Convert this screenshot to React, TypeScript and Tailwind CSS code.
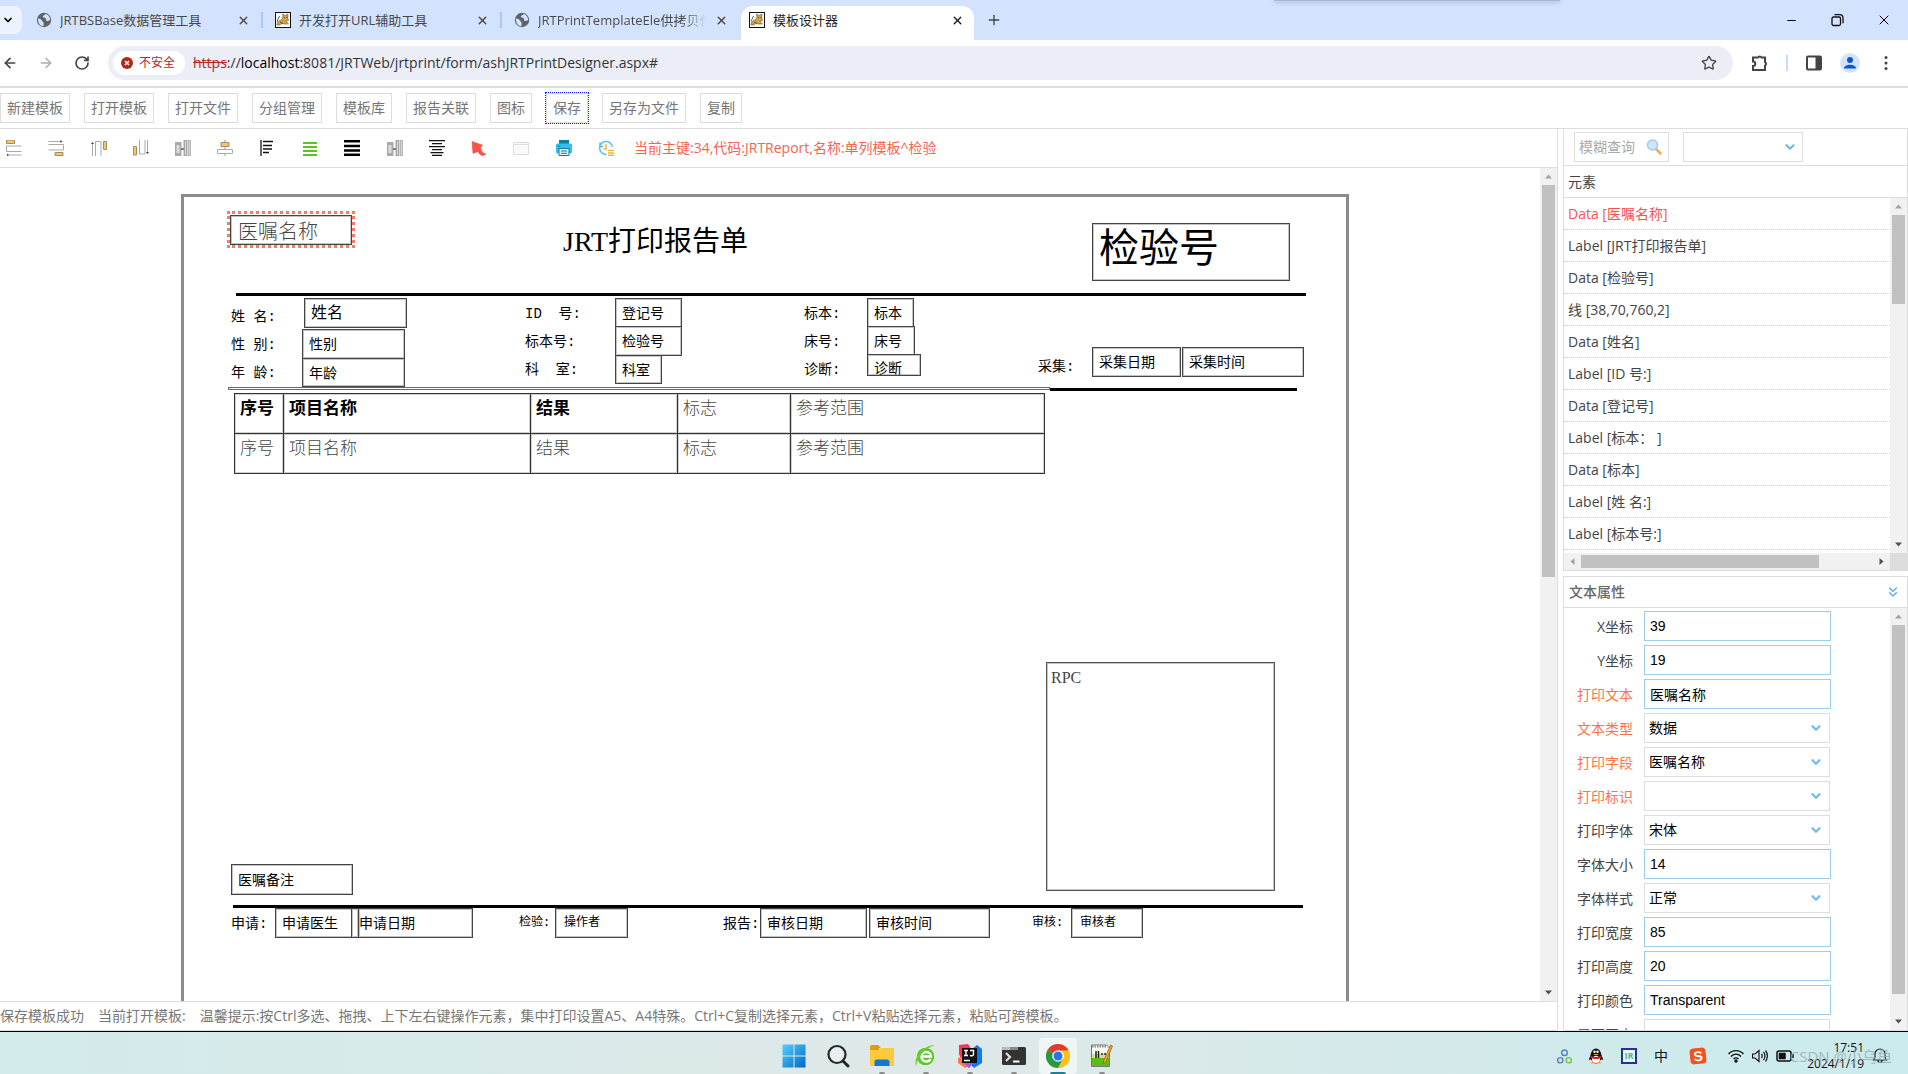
import type { CSSProperties, ReactNode } from 'react'
import clsx from 'clsx'
import { ArrowLeft, ArrowRight, ChevronDown, ChevronsDown, Minus, Plus, RotateCw, Star, X } from 'lucide-react'

const menuButtons = ['新建模板', '打开模板', '打开文件', '分组管理', '模板库', '报告关联', '图标', '保存', '另存为文件', '复制']

const elements = [
    'Data [医嘱名称]',
    'Label [JRT打印报告单]',
    'Data [检验号]',
    '线 [38,70,760,2]',
    'Data [姓名]',
    'Label [ID 号:]',
    'Data [登记号]',
    'Label [标本： ]',
    'Data [标本]',
    'Label [姓 名:]',
    'Label [标本号:]',
]

interface Field {
    label: string
    value: string
    select?: boolean
    hot?: boolean
}

const fields: Field[] = [
    { label: 'X坐标', value: '39' },
    { label: 'Y坐标', value: '19' },
    { label: '打印文本', value: '医嘱名称', hot: true },
    { label: '文本类型', value: '数据', select: true, hot: true },
    { label: '打印字段', value: '医嘱名称', select: true, hot: true },
    { label: '打印标识', value: '', select: true, hot: true },
    { label: '打印字体', value: '宋体', select: true },
    { label: '字体大小', value: '14' },
    { label: '字体样式', value: '正常', select: true },
    { label: '打印宽度', value: '85' },
    { label: '打印高度', value: '20' },
    { label: '打印颜色', value: 'Transparent' },
    { label: '是否画小', value: '', select: true },
]

// Positions on the sheet, in px from its inner top-left corner
interface Box {
    x: number
    y: number
    w: number
    h: number
    text: string
    cls?: string
}

const plain = 'pl-1.5 pt-0.5'

const boxes: Box[] = [
    { x: 46, y: 18, w: 122, h: 30, text: '医嘱名称', cls: 'pl-[7px] pt-2 text-[20px] font-light text-[#444]' },
    { x: 908, y: 26, w: 198, h: 58, text: '检验号', cls: 'pl-1.5 text-[40px]' },
    { x: 120, y: 101, w: 103, h: 30, text: '姓名', cls: 'pl-1.5 pt-0.5 text-base' },
    { x: 118, y: 132, w: 103, h: 30, text: '性别' },
    { x: 118, y: 161, w: 103, h: 29, text: '年龄' },
    { x: 431, y: 101, w: 67, h: 30, text: '登记号' },
    { x: 431, y: 129, w: 67, h: 30, text: '检验号' },
    { x: 431, y: 158, w: 47, h: 29, text: '科室' },
    { x: 683, y: 101, w: 47, h: 30, text: '标本' },
    { x: 683, y: 129, w: 48, h: 30, text: '床号' },
    { x: 683, y: 157, w: 54, h: 22, text: '诊断', cls: 'pl-1.5 pt-2' },
    { x: 908, y: 150, w: 89, h: 30, text: '采集日期' },
    { x: 998, y: 150, w: 122, h: 30, text: '采集时间' },
    { x: 47, y: 667, w: 122, h: 31, text: '医嘱备注' },
    { x: 91, y: 711, w: 84, h: 30, text: '申请医生' },
    { x: 167, y: 711, w: 122, h: 30, text: '' },
    { x: 174, y: 711, w: 115, h: 30, text: '申请日期', cls: 'pl-0 pt-0.5' },
    { x: 371, y: 711, w: 73, h: 30, text: '操作者', cls: 'pl-2 text-xs' },
    { x: 576, y: 711, w: 107, h: 30, text: '审核日期' },
    { x: 685, y: 711, w: 121, h: 30, text: '审核时间' },
    { x: 887, y: 711, w: 72, h: 30, text: '审核者', cls: 'pl-2 text-xs' },
]

interface Label {
    x: number
    y: number
    text: string
    cls?: string
}

const labels: Label[] = [
    { x: 47, y: 110, text: '姓 名:' },
    { x: 47, y: 138, text: '性 别:' },
    { x: 47, y: 166, text: '年 龄:' },
    { x: 341, y: 107, text: 'ID  号:' },
    { x: 341, y: 135, text: '标本号:' },
    { x: 341, y: 163, text: '科  室:' },
    { x: 620, y: 107, text: '标本:' },
    { x: 620, y: 135, text: '床号:' },
    { x: 620, y: 163, text: '诊断:' },
    { x: 854, y: 160, text: '采集:' },
    { x: 47, y: 717, text: '申请:' },
    { x: 335, y: 716, text: '检验:', cls: 'text-xs' },
    { x: 539, y: 717, text: '报告:' },
    { x: 848, y: 716, text: '审核:', cls: 'text-xs' },
]

const rules = [
    { x: 52, y: 96, w: 1070, h: 3 },
    { x: 866, y: 191, w: 247, h: 3 },
    { x: 49, y: 708, w: 1070, h: 3 },
]

const columns = ['序号', '项目名称', '结果', '标志', '参考范围']

const place = (x: number, y: number, w?: number, h?: number): CSSProperties => ({ left: x, top: y, width: w, height: h })

function GlobeIcon() {
    return (
        <svg className="size-4 shrink-0" viewBox="0 0 16 16">
            <circle cx="8" cy="8" r="7.2" fill="#5f6368" />
            <path d="M2 6.5c2 .3 3.5.7 3.8 2 .3 1 1.6.8 1.7 2.2v3.6C4 14 1.7 11 2 6.5Z" fill="#d3e3fd" />
            <path d="M9.5 2.1c-.3 1.5-2.5 1.2-2.7 2.5-.1 1.3 2 .7 3 1.8.8 1-.2 2.4 1.2 2.6 1.2.2 1.6-.6 3-.8.3-3-1.7-5.3-4.5-6.1Z" fill="#d3e3fd" />
        </svg>
    )
}

function CatIcon() {
    return (
        <svg className="size-4 shrink-0" viewBox="0 0 16 16">
            <rect x="0.5" y="0.5" width="15" height="15" fill="#fff" stroke="#111" />
            <path d="M2 13c0-3 1.5-4.5 4.5-5L8 5l-.5-3 2.5 1.5L13 2l-.3 4 .8 2.5-2.5 1 2.5 2.5H9l-2-1.5L5 13Z" fill="#d3a447" stroke="#6b5427" strokeWidth=".6" />
            <path d="M2 9.5 4.5 4M9 5.500h1M11.500 5.500h1M5 10l3 2" stroke="#333" strokeWidth=".8" />
        </svg>
    )
}

interface TabProps {
    title: string
    cat?: boolean
    active?: boolean
    fade?: boolean
}

function Tab({ title, cat, active, fade }: TabProps) {
    return (
        <div
            className={clsx(
                'flex items-center gap-2 text-[13px]',
                active ? 'ml-0.5 mt-1.5 h-[34px] w-[233px] rounded-t-xl bg-white pb-1.5 pl-2 pr-2.5 text-[#1f1f1f]' : 'h-10 w-[237px] pl-3 pr-[11px] text-[#474747]',
            )}
        >
            {cat ? <CatIcon /> : <GlobeIcon />}
            <span className={clsx('flex-1 overflow-hidden whitespace-nowrap', fade && 'bg-linear-to-r from-[#474747] from-85% to-transparent bg-clip-text text-transparent')}>
                {title}
            </span>
            <button aria-label="关闭标签页">
                <X className="size-[13px]" strokeWidth={2.5} />
            </button>
        </div>
    )
}

function BrowserBar() {
    return (
        <header>
            <div className="relative flex h-10 bg-[#d3e3fd]">
                <button aria-label="搜索标签页" className="mt-1.5 flex h-7 w-[22px] items-center rounded-r-lg bg-[#edf3fe] pl-0.5">
                    <ChevronDown className="size-3" strokeWidth={3.5} />
                </button>
                <div className="flex flex-1 items-center pl-0.5">
                    <Tab title="JRTBSBase数据管理工具" />
                    <div className="h-4 w-0.5 bg-[#a8c7fa]" />
                    <Tab title="开发打开URL辅助工具" cat />
                    <div className="h-4 w-0.5 bg-[#a8c7fa]" />
                    <Tab title="JRTPrintTemplateEle供拷贝代码" fade />
                    <Tab title="模板设计器" cat active />
                    <button aria-label="新标签页" className="ml-3">
                        <Plus className="size-4 text-[#444]" />
                    </button>
                </div>
                <div className="flex items-center gap-[31px] pr-4">
                    <button aria-label="最小化"><Minus className="size-[13px]" /></button>
                    <button aria-label="还原" className="size-4">
                        <svg viewBox="0 0 16 16" fill="none" stroke="#111" strokeWidth="1.3">
                            <rect x="3" y="5" width="8.5" height="8.5" rx="1.5" />
                            <path d="M5.5 2.7H11a3 3 0 0 1 3 3v5.500" />
                        </svg>
                    </button>
                    <button aria-label="关闭"><X className="size-4" strokeWidth={1.5} /></button>
                </div>
                <div className="absolute right-[348px] top-0 h-px w-[286px] bg-[#a9b6cb] shadow-[0_1px_4px_#6b7a92]" />
            </div>
            <div className="flex h-12 items-center border-b-2 border-[#ddd] pr-3.5 text-[#444]">
                <button aria-label="后退" className="ml-0.5"><ArrowLeft className="size-4" strokeWidth={2.5} /></button>
                <button aria-label="前进" className="ml-5"><ArrowRight className="size-4 text-[#aaa]" /></button>
                <button aria-label="刷新" className="ml-5"><RotateCw className="size-4" strokeWidth={2.5} /></button>
                <div className="ml-[18px] flex h-[34px] flex-1 items-center rounded-full bg-[#ebeef7] pl-[5px] pr-4">
                    <button className="flex h-6 items-center gap-1.5 rounded-full bg-white pl-2 pr-2.5 text-xs text-[#b3261e]">
                        <svg className="size-3" viewBox="0 0 12 12">
                            <circle cx="6" cy="6" r="6" fill="#b3261e" />
                            <path d="m4 4 4 4m0-4-4 4" stroke="#fff" strokeWidth="1.6" />
                        </svg>
                        不安全
                    </button>
                    <a href="#" className="ml-2 flex-1 text-sm text-[#333]">
                        <span className="text-[#b3261e] line-through">https</span>://<span className="text-black">localhost</span>:8081/JRTWeb/jrtprint/form/ashJRTPrintDesigner.aspx#
                    </a>
                    <Star className="size-4" />
                </div>
                <svg className="ml-[18px] size-[18px]" viewBox="0 0 18 18" fill="none" stroke="#444" strokeWidth="2">
                    <path d="M2 3.5h5a2 2 0 0 1 3.5 0H14V8a2 2 0 0 1 0 3.5V16H2v-4a2.2 2.2 0 0 0 0-4.5Z" />
                </svg>
                <div className="ml-[17px] h-4 w-0.5 bg-[#c7dcfc]" />
                <svg className="ml-[18px] size-4" viewBox="0 0 16 16">
                    <rect x="1" y="1.5" width="14" height="13" rx="1" fill="none" stroke="#444" strokeWidth="2" />
                    <path d="M9.5 1H15v14H9.5z" fill="#444" />
                </svg>
                <svg className="ml-[18px] size-5" viewBox="0 0 20 20">
                    <circle cx="10" cy="10" r="10" fill="#d3e3fd" />
                    <circle cx="10" cy="7" r="3" fill="#0b57d0" />
                    <path d="M4 15.500c0-5 12-5 12 0z" fill="#0b57d0" />
                </svg>
                <svg className="ml-[18px] size-4" viewBox="0 0 16 16" fill="#444">
                    <circle cx="8" cy="2.5" r="1.5" />
                    <circle cx="8" cy="8" r="1.5" />
                    <circle cx="8" cy="13.5" r="1.5" />
                </svg>
            </div>
        </header>
    )
}

const widthIcon = (
    <>
        <path d="M0 2h6.5v14H0z" fill="#a9a9a9" />
        <path d="M1.500 5v8h3V5z" fill="#dcdcdc" />
        <path d="M6 8h3v2H6z" fill="#777" />
        <path d="M8.500 0h3.500v16H8.500z" fill="#a5a5a5" />
        <path d="M12.500 0H16v16h-3.500z" fill="#b5b5b5" />
        <path d="M10.500 1v14M14.500 1v14" stroke="#d8d8d8" />
    </>
)

const toolIcons: { name: string; art: ReactNode }[] = [
    { name: '左对齐', art: <><path d="M.5 0h8v3.5h-8z" fill="#edc57b" stroke="#a98d55" /><path d="M15.5 6H.5v5.5h15M15.5 15H1" fill="none" stroke="#aaa" /><path d="M1 13.500v2.500l2-1z" fill="#444" /></> },
    { name: '右对齐', art: <><path d="M7 12.5h8v3H7z" fill="#edc57b" stroke="#a98d55" /><path d="M.5 4.5h15V10H.5M.5 1.5H14" fill="none" stroke="#aaa" /><path d="M12.500 0v3l2-1.500z" fill="#444" /></> },
    { name: '顶对齐', art: <><path d="M12.5 1.500h3v8h-3z" fill="#edc57b" stroke="#a98d55" /><path d="M4.5 16V1.5H10V16M1.5 16V3" fill="none" stroke="#aaa" /><path d="M0 4h3L1.500 2z" fill="#444" /></> },
    { name: '底对齐', art: <><path d="M.5 6.500h3V15h-3z" fill="#edc57b" stroke="#a98d55" /><path d="M6.5 0v14H12V0M14.5 0v14" fill="none" stroke="#aaa" /><path d="M13 12h3l-1.500 2z" fill="#444" /></> },
    { name: '等宽', art: widthIcon },
    { name: '居中对齐', art: <><path d="M8 0v16" stroke="#999" /><path d="M4 2.500h8v4H4z" fill="#edc57b" stroke="#a98d55" /><path d="M.5 9.500h15v4H.5z" fill="#fff" stroke="#aaa" /></> },
    { name: '文本左对齐', art: <path d="M1 0v16M3 1.500h10M3 9h9M3 12.500h6M3 5.500h9" stroke="#111" strokeWidth="1.3" /> },
    { name: '行距', art: <path d="M1 3h14M1 7h14M1 11h14M1 15h14" stroke="#5cc422" strokeWidth="1.8" /> },
    { name: '等高', art: <path d="M0 1.300h16M0 6h16M0 10.500h16M0 14.700h16" stroke="#000" strokeWidth="2.6" /> },
    { name: '等间距', art: widthIcon },
    { name: '文本居中', art: <path d="M0 .7h16M3 3.700h10M0 6.700h16M3 9.700h10M1.500 12.700h13M3 15.400h10" stroke="#111" strokeWidth="1.2" /> },
    { name: '选择', art: <path d="M1 1.500 11.500 5l-2 3 2 4.500L15 14c-3 2.500-6 2-8-2.500l-5 2z" fill="#fb5347" stroke="#e0483e" strokeWidth=".5" /> },
    { name: '面板', art: <path d="M.5 2.500h15v12H.5zM.5 4.500h15" fill="#fafafa" stroke="#ddd" /> },
    { name: '打印', art: <><path d="M3 0h10v4H3z" fill="#0d7fa5" /><rect y="3.5" width="16" height="10" rx="1.5" fill="#35bfec" /><path d="M3 8.500h10v7H3z" fill="#d9f4fc" stroke="#0d7fa5" /><path d="M5 11h6M5 13.300h6M1.500 6h3" stroke="#0d7fa5" /></> },
    { name: '历史', art: <><path d="M8.500 14.500A6.500 6.500 0 1 1 14.500 7M2 2.500v4h3.500" fill="none" stroke="#57c3f2" strokeWidth="1.6" /><path d="M8 4v5H5.500M10 10.500h6M10 13h6M10 15.300h6" fill="none" stroke="#f5b53d" strokeWidth="1.5" /></> },
]

interface ScrollbarProps {
    thumb: string
    horizontal?: boolean
}

function Scrollbar({ thumb, horizontal }: ScrollbarProps) {
    return (
        <div className={clsx('flex shrink-0 bg-[#f1f1f1]', horizontal ? 'h-[17px] flex-1' : 'w-[17px] flex-col')}>
            <svg className="size-[17px]" viewBox="0 0 17 17">
                <path d={horizontal ? 'M10.5 5v7l-4-3.5z' : 'M5 10.5h7l-3.5-4z'} fill="#a3a3a3" />
            </svg>
            <div className="flex-1">
                <div className={clsx('bg-[#c1c1c1]', horizontal ? 'mt-0.5 h-[13px]' : 'ml-0.5 w-[13px]', thumb)} />
            </div>
            <svg className="size-[17px]" viewBox="0 0 17 17">
                <path d={horizontal ? 'M6.5 5v7l4-3.5z' : 'M5 6.5h7l-3.5 4z'} fill="#505050" />
            </svg>
        </div>
    )
}

function Sheet() {
    return (
        <div className="relative ml-[181px] mt-[26px] h-[1650px] w-[1168px] border-[3px] border-[#8c8c8c] font-['Liberation_Mono','Noto_Sans_CJK_SC',monospace] text-sm text-black">
            <div className="absolute border-[3px] border-dotted border-[#fb7a64]" style={place(43, 14, 128, 37)} />
            <h1 className="absolute whitespace-nowrap font-['Liberation_Serif','Noto_Sans_CJK_SC',serif] text-[28px] leading-9" style={place(379, 27)}>
                JRT打印报告单
            </h1>
            {rules.map((r) => (
                <div key={r.y} className="absolute bg-black" style={place(r.x, r.y, r.w, r.h)} />
            ))}
            {labels.map((l) => (
                <span key={`${l.x}-${l.y}`} className={clsx('absolute whitespace-pre leading-5', l.cls ?? 'text-sm')} style={place(l.x, l.y)}>
                    {l.text}
                </span>
            ))}
            {boxes.map((b) => (
                <div
                    key={`${b.x}-${b.y}`}
                    className={clsx('absolute flex items-center whitespace-nowrap border border-[#444] leading-none inset-ring inset-ring-[#c4c4c4]', b.cls ?? plain)}
                    style={place(b.x, b.y, b.w, b.h)}
                >
                    {b.text}
                </div>
            ))}
            <div className="absolute border border-[#666]" style={place(44, 190, 822, 3)} />
            <table className="absolute table-fixed border-collapse text-left text-[17px] leading-6" style={place(50, 196, 811)}>
                <colgroup>
                    <col className="w-[49px]" />
                    <col className="w-[247px]" />
                    <col className="w-[147px]" />
                    <col className="w-[113px]" />
                    <col />
                </colgroup>
                <thead>
                    <tr className="h-10">
                        {columns.map((c, i) => (
                            <th key={c} className={clsx('border border-[#333] pb-2 pl-[5px] inset-ring inset-ring-[#d0d0d0]', i < 3 ? 'font-bold' : 'font-light text-[#444]')}>{c}</th>
                        ))}
                    </tr>
                </thead>
                <tbody>
                    <tr className="h-10">
                        {columns.map((c) => (
                            <td key={c} className="border border-[#333] pb-2 pl-[5px] font-light text-[#444] inset-ring inset-ring-[#d0d0d0]">{c}</td>
                        ))}
                    </tr>
                </tbody>
            </table>
            <div className="absolute border border-[#555] pl-1 pt-[3px] font-['Liberation_Serif',serif] text-base text-[#444] inset-ring inset-ring-[#c4c4c4]" style={place(862, 465, 229, 229)}>
                RPC
            </div>
        </div>
    )
}

function ElementPanel() {
    return (
        <section className="border-x border-b border-[#ddd]">
            <div className="flex h-[37px] items-center gap-3.5 border-b border-[#ddd] pl-2.5">
                <div className="flex h-[30px] w-[95px] items-center border border-[#ddd] pl-1 pr-1.5">
                    <input aria-label="模糊查询" placeholder="模糊查询" className="min-w-0 flex-1 outline-none placeholder:text-[#aaa]" />
                    <svg className="size-4" viewBox="0 0 16 16">
                        <path d="m10 10 4.5 4.5" stroke="#f0a95b" strokeWidth="2.5" strokeLinecap="round" />
                        <circle cx="6.5" cy="6" r="5" fill="#cfe6fb" stroke="#a8c8e8" strokeWidth="1.5" />
                    </svg>
                </div>
                <div className="relative">
                    <select aria-label="元素类型" className="h-[30px] w-[120px] appearance-none border border-[#ddd]" />
                    <ChevronDown className="pointer-events-none absolute right-1.5 top-2 size-3.5 text-[#73bbee]" strokeWidth={4} />
                </div>
            </div>
            <h2 className="flex h-8 items-center border-b border-[#ddd] pl-1 text-[#444]">元素</h2>
            <div className="flex h-[355px]">
                <ul className="flex-1 overflow-hidden">
                    {elements.map((e, i) => (
                        <li key={e} className={clsx('flex h-8 items-center whitespace-pre border-b border-dotted border-[#ccc] pl-1', i === 0 ? 'text-[#fb5350]' : 'text-[#444]')}>
                            {e}
                        </li>
                    ))}
                </ul>
                <Scrollbar thumb="h-[89px]" />
            </div>
            <div className="flex">
                <Scrollbar thumb="w-[238px]" horizontal />
                <div className="w-[17px] bg-[#dcdcdc]" />
            </div>
        </section>
    )
}

function PropertyPanel() {
    return (
        <section className="mt-[5px] flex min-h-0 flex-1 flex-col border border-[#ddd]">
            <h2 className="flex h-[31px] shrink-0 items-center justify-between border-b border-[#ddd] pl-[5px] pr-1.5 font-medium text-[#666]">
                文本属性
                <button aria-label="折叠"><ChevronsDown className="size-4 text-[#58aee8]" /></button>
            </h2>
            <div className="flex min-h-0 flex-1">
                <form className="flex min-w-0 flex-1 flex-col gap-1 overflow-hidden pt-[3px]">
                    {fields.map((f) => (
                        <div key={f.label} className="flex h-[30px] shrink-0 items-center gap-[11px]">
                            <label htmlFor={f.label} className={clsx('w-[69px] pt-0.5 text-right', f.hot ? 'text-[#ff7349]' : 'text-[#444]')}>{f.label}</label>
                            {f.select ? (
                                <div className="relative">
                                    <select id={f.label} className="h-[30px] w-[186px] appearance-none border border-[#ddd] pl-1 font-['Liberation_Sans','Noto_Sans_CJK_SC',sans-serif] text-black">
                                        <option>{f.value}</option>
                                    </select>
                                    <ChevronDown className="pointer-events-none absolute right-[7px] top-2 size-3.5 text-[#73bbee]" strokeWidth={4} />
                                </div>
                            ) : (
                                <input
                                    id={f.label}
                                    defaultValue={f.value}
                                    className="h-[30px] w-[187px] border border-[#9bcdef] px-[5px] font-['Liberation_Sans','Noto_Sans_CJK_SC',sans-serif] text-black outline-none"
                                />
                            )}
                        </div>
                    ))}
                </form>
                <Scrollbar thumb="h-[369px]" />
            </div>
        </section>
    )
}

const apps: { name: string; state?: 'open' | 'active'; art: ReactNode }[] = [
    { name: '开始', art: <><defs><linearGradient id="win" x2="1" y2="1"><stop stopColor="#55d0fb" /><stop offset="1" stopColor="#0067c9" /></linearGradient></defs><path d="M.5.5h11v11H.5zM12.5.5h11v11h-11zM.5 12.5h11v11H.5zM12.5 12.5h11v11h-11z" fill="url(#win)" /></> },
    { name: '搜索', art: <><circle cx="11" cy="10.5" r="8.5" fill="#e8eeee" stroke="#262626" strokeWidth="2.2" /><path d="m17 17 5 5" stroke="#262626" strokeWidth="3" strokeLinecap="round" /></> },
    { name: '文件资源管理器', state: 'open', art: <><path d="M0 3a2 2 0 0 1 2-2h6l3 3H9v3H0z" fill="#dd9d08" /><path d="M0 6h9l2-2h13v18H0z" fill="#fdca3d" /><path d="M4.5 22v-4A2.5 2.5 0 0 1 7 15.500h10a2.500 2.500 0 0 1 2.500 2.500v4z" fill="#1277cf" /></> },
    { name: '浏览器', state: 'open', art: <><circle cx="11.5" cy="12.5" r="9.5" fill="#5cc52e" stroke="#dff3d5" strokeWidth="1.5" /><path d="M7 12.500h10c0-6-9.500-6-9.500 0 0 5.500 7 6.500 9 2.500" fill="none" stroke="#fff" strokeWidth="2.4" /><path d="M2 22C-1 13 10 1 21 1 15 3 4 10 2 22z" fill="#6fcb3e" /></> },
    { name: 'IntelliJ IDEA', state: 'open', art: <><path d="m1 1 9-1 4 6L3 15l-2-5z" fill="#fe315d" /><path d="m14 5 5-4 5 4v14l-8 5-5-5z" fill="#087cfa" /><path d="m0 14 6-2 6 9-5 3-7-5z" fill="#f97a4e" /><path d="M6 19h9l-4 5.500z" fill="#a35bd6" /><path d="M4 4h15v15H4z" fill="#111" /><path d="M6 6.500h4M8 6.500v5M6 11.500h4M12 6.500h3.500v4c0 1.500-2 1.500-3.500.8M6 16.500h6" fill="none" stroke="#fff" strokeWidth="1.4" /></> },
    { name: '终端', state: 'open', art: <><rect y="3" width="24" height="18" rx="1.5" fill="#333" /><path d="M0 4.500A1.500 1.500 0 0 1 1.500 3H8v3H0z" fill="#bbb" /><path d="M8 3h8v3H8z" fill="#888" /><path d="m4 9 4 4-4 4" fill="none" stroke="#ddd" strokeWidth="2.2" /><path d="M11 17.500h6.500" stroke="#fff" strokeWidth="2" /></> },
    { name: 'Chrome', state: 'active', art: <><circle cx="12" cy="12" r="12" fill="#fbc116" /><path d="M12 12 1.600 6A12 12 0 0 1 22.400 6z" fill="#e33b2e" /><path d="M12 12 1.600 6A12 12 0 0 0 12 24l5.200-9z" fill="#279847" /><path d="M12 6.500h10.700A12 12 0 0 1 12 24l5-9z" fill="#fbc116" /><circle cx="12" cy="12" r="5.8" fill="#fff" /><circle cx="12" cy="12" r="4.5" fill="#2b74e8" /></> },
    { name: 'Notepad++', state: 'open', art: <><path d="M1.500 1h15l3 3v18.500h-18z" fill="#f5faf0" stroke="#777" /><path d="M2 14h17v8H2z" fill="#5fbb1c" /><path d="M2 10h17v4H2z" fill="#bfe89c" /><path d="M2 2.500h14" stroke="#888" strokeDasharray="1.5 1" strokeWidth="2" /><path d="M6 7v7M8.500 7v7M11 10h2M14 10h2" stroke="#222" strokeWidth="1.5" /><path d="m20.500 1 2 1L16 18l-2.500 2V17z" fill="#f2a71f" stroke="#8a5b13" strokeWidth=".7" /></> },
]

function Taskbar() {
    return (
        <footer className="flex h-[43px] shrink-0 border-t border-black bg-linear-to-r from-[#d3ebeb] via-[#dfe8e8] to-[#c9ebed]">
            <div className="flex-1" />
            <nav className="flex flex-none gap-1.5 pl-2">
                {apps.map((a) => (
                    <button key={a.name} aria-label={a.name} className={clsx('relative mt-1.5 flex w-[38px] items-center justify-center rounded', a.state === 'active' && 'bg-[#f0f5f6]')}>
                        <svg className="size-6" viewBox="0 0 24 24">{a.art}</svg>
                        {a.state && <span className={clsx('absolute bottom-0 h-0.5 rounded-t', a.state === 'active' ? 'w-4 bg-[#1f7f8c]' : 'w-1.5 bg-[#888]')} />}
                    </button>
                ))}
            </nav>
            <div className="relative flex flex-1 items-center justify-end pr-5 pt-1.5 text-[#111]">
                <svg className="mr-4 size-[15px]" viewBox="0 0 16 16" fill="none" strokeWidth="1.5">
                    <circle cx="8" cy="4" r="3" stroke="#5b7fc0" />
                    <circle cx="3.5" cy="12" r="2.8" stroke="#5b7fc0" />
                    <circle cx="12.5" cy="12" r="2.8" stroke="#6cc83c" />
                </svg>
                <svg className="mr-[17px] size-4" viewBox="0 0 16 16">
                    <ellipse cx="8" cy="8" rx="5.5" ry="7.5" fill="#111" />
                    <path d="M1 12c0-2 1-4 2-5l1 4zM15 12c0-2-1-4-2-5l-1 4z" fill="#111" />
                    <ellipse cx="8" cy="11.5" rx="4" ry="3.5" fill="#fff" />
                    <path d="M2.500 7.500c3 2 8 2 11 0v2c-3 2-8 2-11 0z" fill="#e11b22" />
                    <circle cx="6.5" cy="3.8" r="1.2" fill="#fff" />
                    <circle cx="9.5" cy="3.8" r="1.2" fill="#fff" />
                    <path d="M5 6h6l-3 1.500zM2 15.500h5l-2-2zM9 15.500h5l-3-2z" fill="#f7a81b" />
                </svg>
                <span className="mr-[17px] flex size-4 items-center justify-center border-2 border-[#2c2f92] bg-[#e6f7f7] text-[9px] font-bold text-[#3bb9ae]">IR</span>
                <span className="mr-[22px] text-sm">中</span>
                <span className="mr-[22px] flex size-4 -rotate-6 items-center justify-center rounded-sm bg-[#f4511e] font-['Liberation_Sans',sans-serif] text-sm font-bold text-white">S</span>
                <svg className="mr-2 size-4" viewBox="0 0 16 16" fill="none" stroke="#111" strokeWidth="1.4">
                    <path d="M.5 6c4-4.500 11-4.500 15 0M3 8.500c3-3 7-3 10 0M5.500 11c1.500-1.500 3.500-1.500 5 0" />
                    <circle cx="8" cy="13" r="1" fill="#111" />
                </svg>
                <svg className="mr-2 size-4" viewBox="0 0 16 16" fill="none" stroke="#111" strokeWidth="1.2">
                    <path d="M.6 6v4H3l4 3.500v-11L3 6zM9.500 6c1 1 1 3 0 4M11.500 4c2 2 2 6 0 8M13.500 2.500c2.500 3 2.500 8 0 11" />
                </svg>
                <svg className="h-3 w-[18px]" viewBox="0 0 18 12" fill="none" stroke="#111" strokeWidth="1.5">
                    <rect x="1" y="1" width="14" height="10" rx="2" />
                    <path d="M3.500 3.500H9v5H3.500z" fill="#111" />
                    <path d="M17 4v4" />
                </svg>
                <div className="w-[70px] text-right text-xs leading-4">
                    <p>17:51</p>
                    <p>2024/1/19</p>
                </div>
                <svg className="ml-2 size-4" viewBox="0 0 16 16" fill="none" stroke="#222" strokeWidth="1.2">
                    <path d="M1.500 12h13L13 9.500V6A5 5 0 0 0 3 6v3.500zM6 12.500a2 2 0 0 0 4 0" />
                </svg>
                <span className="absolute right-4 top-3 whitespace-nowrap text-[15px] leading-6 text-[#98a8ab]/80">CSDN @小乌鱼</span>
            </div>
        </footer>
    )
}

export default function App() {
    return (
        <div className="flex h-screen flex-col overflow-hidden bg-white font-['Open_Sans','Noto_Sans_CJK_SC',sans-serif] text-sm leading-5">
            <BrowserBar />
            <div className="flex h-[41px] shrink-0 items-center gap-3.5 border-b border-[#ddd]">
                {menuButtons.map((b) => (
                    <button key={b} className={clsx('h-[30px] whitespace-nowrap border border-[#ddd] px-1.5 text-[#757575]', b === '保存' && 'outline outline-dotted outline-[#1a1aff]')}>
                        {b}
                    </button>
                ))}
            </div>
            <div className="flex min-h-0 flex-1">
                <main className="flex min-w-0 flex-1 flex-col border-r border-[#ddd]">
                    <div className="flex h-[39px] shrink-0 items-center border-b border-[#ddd] pl-1.5">
                        <div className="flex w-[608px] justify-between">
                            {toolIcons.map((t) => (
                                <button key={t.name} aria-label={t.name} className="size-4">
                                    <svg viewBox="0 0 16 16">{t.art}</svg>
                                </button>
                            ))}
                        </div>
                        <p className="ml-5 text-[#f0674f]">当前主键:34,代码:JRTReport,名称:单列模板^检验</p>
                    </div>
                    <div className="flex min-h-0 flex-1">
                        <div className="flex-1 overflow-hidden">
                            <Sheet />
                        </div>
                        <Scrollbar thumb="h-[392px]" />
                    </div>
                    <div className="flex h-[30px] shrink-0 items-center gap-3.5 border-y border-[#ddd] text-[#777]">
                        <span>保存模板成功</span>
                        <span>当前打开模板:</span>
                        <span>温馨提示:按Ctrl多选、拖拽、上下左右键操作元素，集中打印设置A5、A4特殊。Ctrl+C复制选择元素，Ctrl+V粘贴选择元素，粘贴可跨模板。</span>
                    </div>
                </main>
                <aside className="ml-[5px] flex w-[345px] shrink-0 flex-col">
                    <ElementPanel />
                    <PropertyPanel />
                </aside>
            </div>
            <Taskbar />
        </div>
    )
}
